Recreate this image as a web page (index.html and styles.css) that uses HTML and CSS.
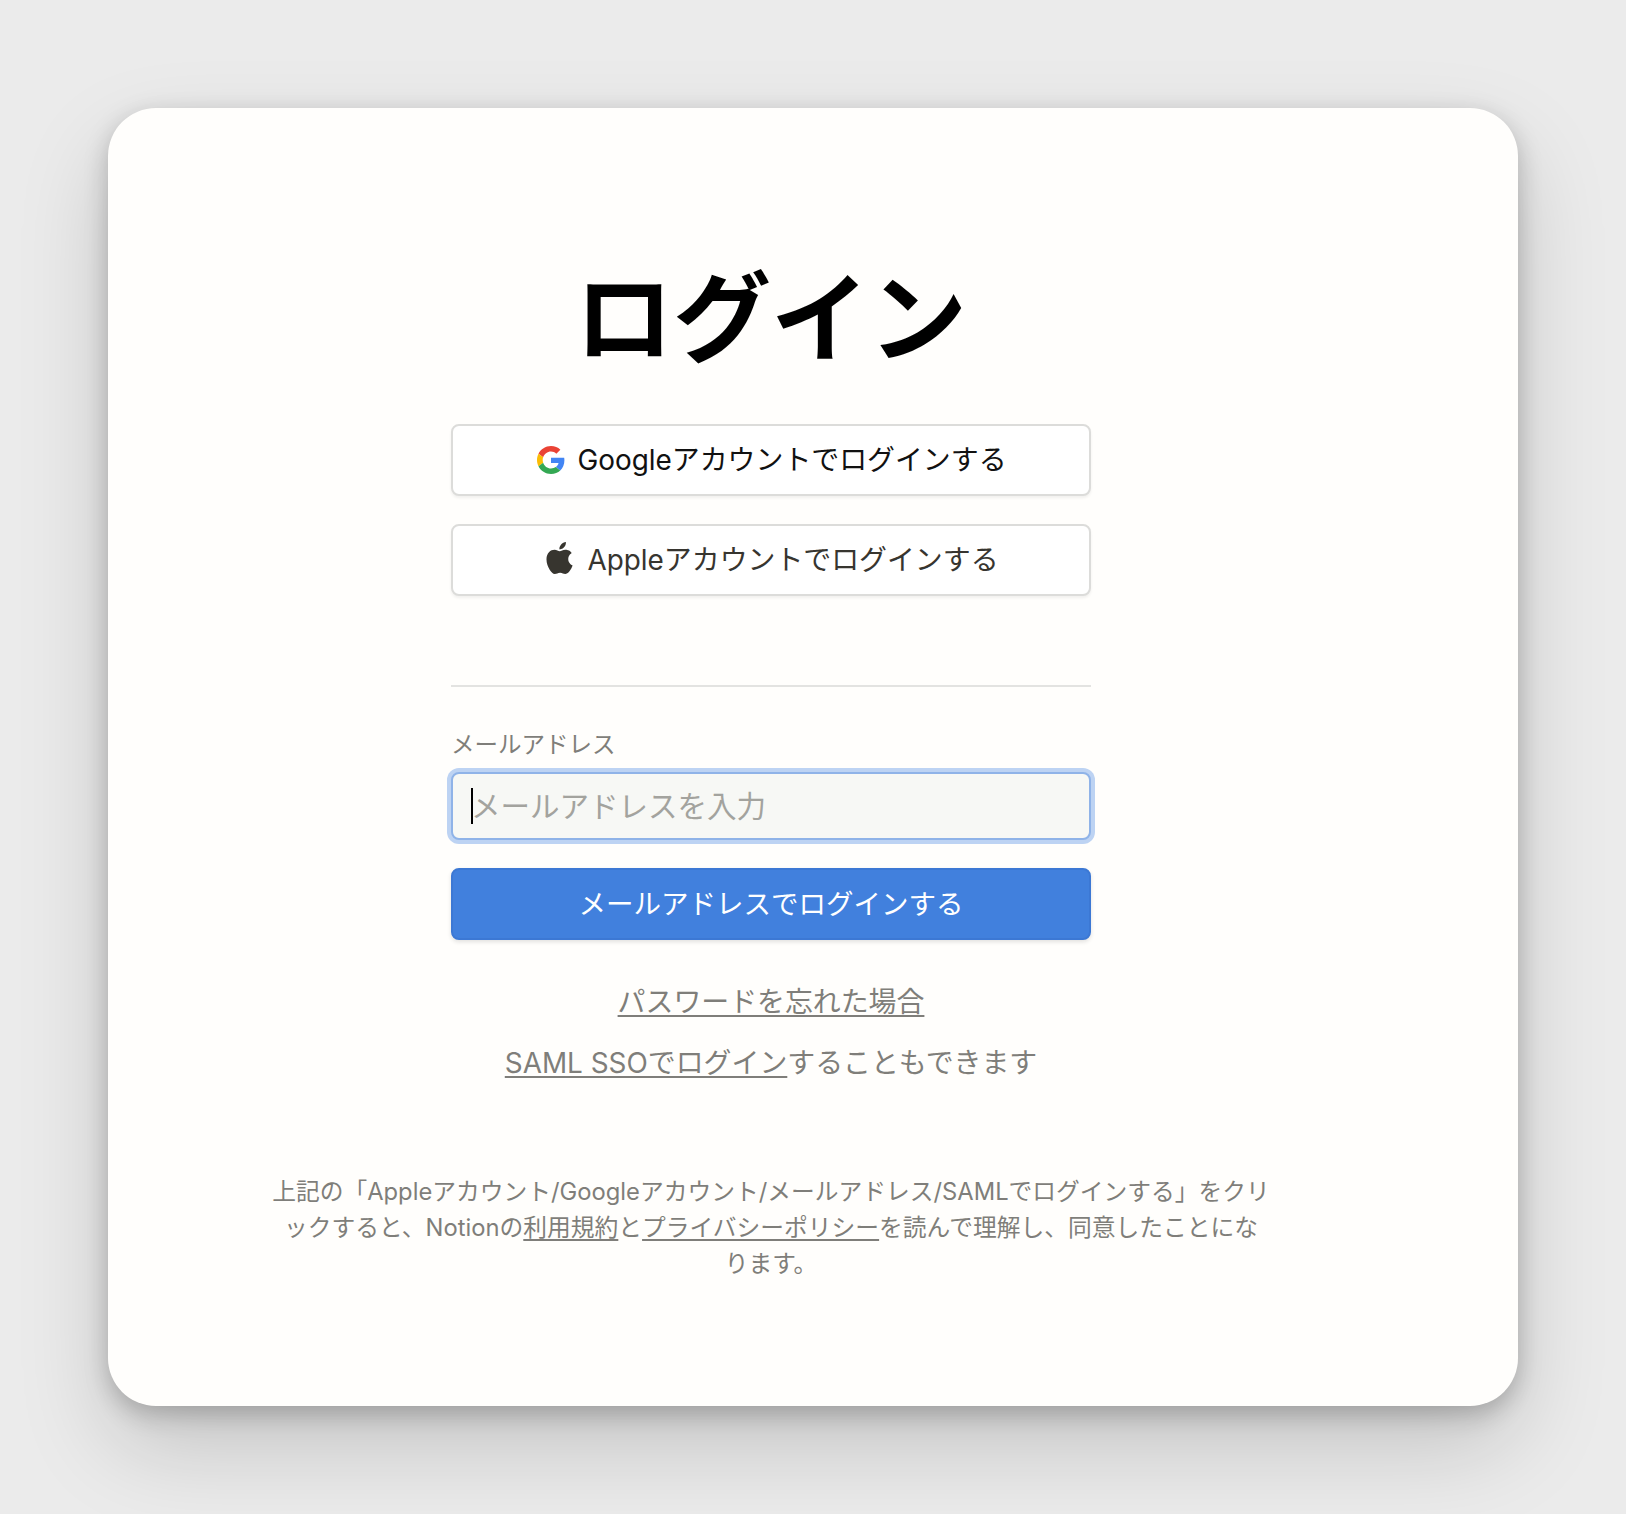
FILE: index.html
```html
<!DOCTYPE html>
<html lang="ja">
<head>
<meta charset="utf-8">
<title>ログイン</title>
<link rel="stylesheet" href="styles.css">
</head>
<body>
<main class="card">
  <h1 class="title">ログイン</h1>
  <div class="form">
    <button class="btn btn-google" type="button">
      <svg class="icon" viewBox="0 0 48 48" aria-hidden="true">
        <path fill="#EA4335" d="M24 9.5c3.54 0 6.71 1.22 9.21 3.6l6.85-6.85C35.9 2.38 30.47 0 24 0 14.62 0 6.51 5.38 2.56 13.22l7.98 6.19C12.43 13.72 17.74 9.5 24 9.5z"/>
        <path fill="#4285F4" d="M46.98 24.55c0-1.57-.15-3.09-.38-4.55H24v9.02h12.94c-.58 2.96-2.26 5.48-4.78 7.18l7.73 6c4.51-4.18 7.09-10.36 7.09-17.65z"/>
        <path fill="#FBBC05" d="M10.53 28.59c-.48-1.45-.76-2.99-.76-4.59s.27-3.14.76-4.59l-7.98-6.19C.92 16.46 0 20.12 0 24c0 3.88.92 7.54 2.56 10.78l7.97-6.19z"/>
        <path fill="#34A853" d="M24 48c6.48 0 11.93-2.13 15.89-5.81l-7.73-6c-2.15 1.45-4.92 2.3-8.16 2.3-6.26 0-11.57-4.22-13.47-9.91l-7.98 6.19C6.51 42.62 14.62 48 24 48z"/>
      </svg>
      <span class="btn-text">Googleアカウントでログインする</span>
    </button>
    <button class="btn btn-apple" type="button">
      <svg class="icon icon-apple" viewBox="0 0 814 1000" aria-hidden="true">
        <path fill="#37352f" d="M788.1 340.9c-5.8 4.5-108.2 62.2-108.2 190.5 0 148.4 130.3 200.9 134.2 202.2-.6 3.2-20.7 71.9-68.7 141.9-42.8 61.6-87.5 123.1-155.5 123.1s-85.5-39.5-164-39.5c-76.5 0-103.7 40.8-165.9 40.8s-105.6-57-155.5-127C46.7 790.7 0 663 0 541.8c0-194.4 126.4-297.5 250.8-297.5 66.1 0 121.2 43.4 162.7 43.4 39.5 0 101.1-46 176.3-46 28.5 0 130.9 2.6 198.3 99.2zm-234-181.5c31.1-36.9 53.1-88.1 53.1-139.3 0-7.1-.6-14.3-1.9-20.1-50.6 1.9-110.8 33.7-147.1 75.8-28.5 32.4-55.1 83.6-55.1 135.5 0 7.8 1.3 15.6 1.9 18.1 3.2.6 8.4 1.3 13.6 1.3 45.4 0 102.5-30.4 135.5-71.3z"/>
      </svg>
      <span class="btn-text">Appleアカウントでログインする</span>
    </button>
    <hr class="divider">
    <label class="label" for="email">メールアドレス</label>
    <div class="field">
      <input class="input" id="email" type="email" placeholder="メールアドレスを入力">
      <span class="caret"></span>
    </div>
    <button class="btn-primary" type="button"><span class="btn-text">メールアドレスでログインする</span></button>
  </div>
  <p class="link-row first"><a href="#">パスワードを忘れた場合</a></p>
  <p class="link-row"><a href="#">SAML SSOでログイン</a>することもできます</p>
  <p class="legal">上記の「Appleアカウント/Googleアカウント/メールアドレス/SAMLでログインする」をクリ<br>ックすると、Notionの<a href="#">利用規約</a>と<a href="#">プライバシーポリシー</a>を読んで理解し、同意したことにな<br>ります。</p>
</main>
</body>
</html>
```
FILE: styles.css
```css
* { box-sizing: border-box; }
html, body { margin: 0; padding: 0; }
body {
  background: #ebebeb;
  padding: 108px 108px 108px;
  font-family: Inter, "Noto Sans CJK JP", sans-serif;
  color: #37352f;
}
.card {
  height: 1298px;
  background: #fffefc;
  border-radius: 48px;
  padding: 153px 84px 0 0;
  display: flex;
  flex-direction: column;
  align-items: center;
  box-shadow: 0 8px 24px rgba(0,0,0,.22), 0 40px 90px rgba(0,0,0,.17);
}
.title {
  margin: 0;
  font-size: 98px;
  line-height: 116px;
  font-weight: 700;
  color: #000;
}
.form {
  width: 640px;
  margin-top: 47px;
  display: flex;
  flex-direction: column;
}
.btn {
  height: 72px;
  margin-bottom: 28px;
  background: #fff;
  border: 2px solid #dcdcda;
  border-radius: 8px;
  box-shadow: 0 2px 3px rgba(15,15,15,.06);
  display: flex;
  align-items: center;
  justify-content: center;
  gap: 12px;
  font-family: inherit;
  font-size: 27.9px;
  padding: 0;
}
.btn-text { position: relative; top: -2px; }
.btn-google { color: #111; padding-left: 2px; }
.btn-apple { color: #37352f; gap: 14px; padding-left: 3px; }
.icon { width: 28px; height: 28px; flex: none; }
.icon-apple { width: 27px; height: 32px; position: relative; top: -2px; }
.divider {
  margin: 61px 0 0;
  border: 0;
  border-top: 2px solid #e3e3e1;
}
.label {
  margin-top: 43px;
  font-size: 23.5px;
  line-height: 30px;
  color: #7f7e7a;
}
.field {
  position: relative;
  margin-top: 12px;
}
.input {
  display: block;
  width: 100%;
  height: 68px;
  background: #f7f8f5;
  border: 2px solid #8fb3e8;
  border-radius: 8px;
  box-shadow: 0 0 0 4px #bdd3f3;
  padding: 0 18px;
  font-family: inherit;
  font-size: 29.5px;
  outline: none;
}
.input::placeholder { color: #a3a39e; opacity: 1; }
.caret {
  position: absolute;
  left: 20px;
  top: 16px;
  width: 2px;
  height: 36px;
  background: #000;
}
.btn-primary {
  height: 72px;
  margin-top: 28px;
  background: #4180dd;
  border: 2px solid #3c78d4;
  border-radius: 8px;
  box-shadow: 0 2px 4px rgba(15,15,15,.12);
  color: #fff;
  font-family: inherit;
  font-size: 27.5px;
  padding: 0;
}
.link-row {
  margin: 25px 0 0;
  font-size: 27.9px;
  line-height: 36px;
  color: #7f7e7a;
}
.link-row.first { margin-top: 44px; }
.link-row a, .legal a { color: inherit; text-decoration: underline; text-underline-offset: 3px; }
.legal {
  width: 1002px;
  margin: 93px 0 0;
  font-size: 23.75px;
  line-height: 36px;
  color: #7f7e7a;
  text-align: center;
}
```
